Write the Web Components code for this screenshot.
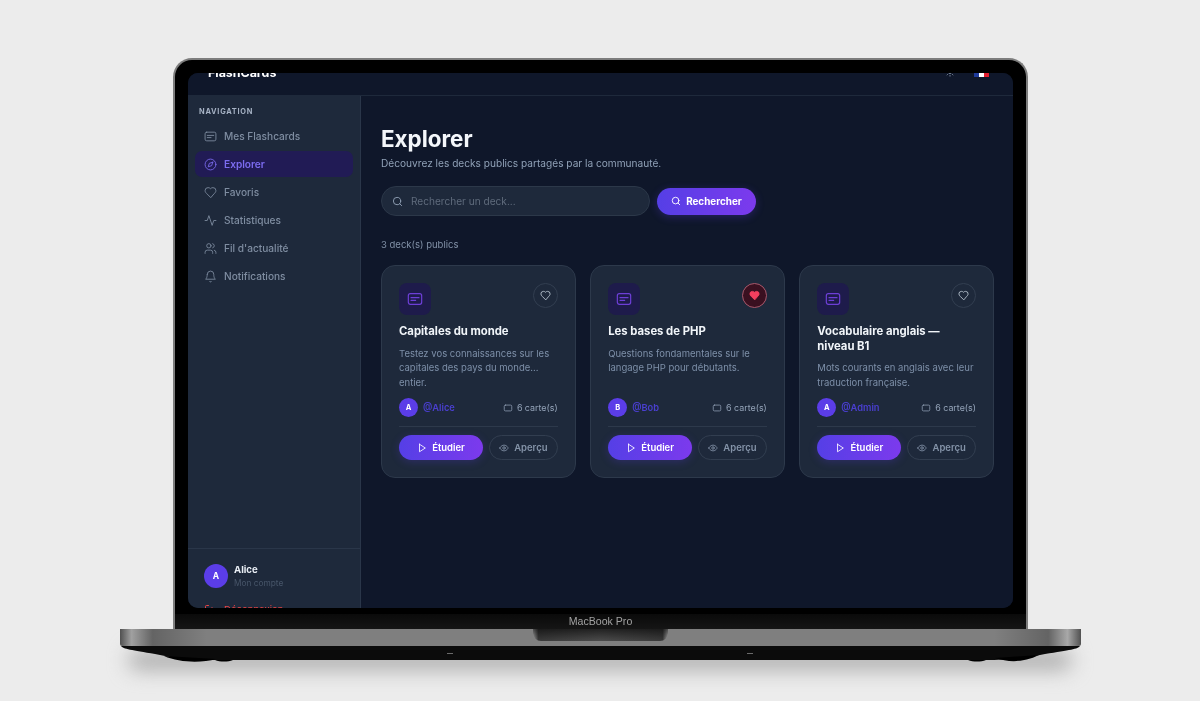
<!DOCTYPE html>
<html lang="fr">
<head>
<meta charset="utf-8">
<title>Explorer</title>
<style>
  html, body { margin: 0; height: 701px; overflow: hidden; background: #ececec; font-family: Inter, "Liberation Sans", sans-serif; }
</style>
</head>
<body>
<mac-frame>
  <app-header></app-header>
  <div style="display:flex;flex:1;min-height:0">
    <app-sidebar>
      <nav-item icon="cards">Mes Flashcards</nav-item>
      <nav-item icon="compass" active>Explorer</nav-item>
      <nav-item icon="heart">Favoris</nav-item>
      <nav-item icon="activity">Statistiques</nav-item>
      <nav-item icon="users">Fil d'actualité</nav-item>
      <nav-item icon="bell">Notifications</nav-item>
    </app-sidebar>
    <explore-page>
      <deck-card title="Capitales du monde" author="Alice" initial="A">Testez vos connaissances sur les capitales des pays du monde... entier.</deck-card>
      <deck-card title="Les bases de PHP" author="Bob" initial="B" liked>Questions fondamentales sur le langage PHP pour débutants.</deck-card>
      <deck-card title="Vocabulaire anglais — niveau B1" author="Admin" initial="A">Mots courants en anglais avec leur traduction française.</deck-card>
    </explore-page>
  </div>
</mac-frame>

<script>
const ICONS = {
  cards: '<rect x="2" y="4" width="20" height="16" rx="3"/><path d="M6 10h12M6 14h7"/>',
  card: '<rect x="3" y="5" width="18" height="14" rx="3"/>',
  compass: '<circle cx="12" cy="12" r="10"/><polygon points="16.24 7.76 14.12 14.12 7.76 16.24 9.88 9.88 16.24 7.76"/>',
  heart: '<path d="M19 14c1.49-1.46 3-3.21 3-5.5A5.5 5.5 0 0 0 16.5 3c-1.76 0-3 .5-4.5 2-1.5-1.5-2.74-2-4.5-2A5.5 5.5 0 0 0 2 8.5c0 2.3 1.5 4.05 3 5.5l7 7Z"/>',
  activity: '<path d="M22 12h-4l-3 9L9 3l-3 9H2"/>',
  users: '<path d="M16 21v-2a4 4 0 0 0-4-4H6a4 4 0 0 0-4 4v2"/><circle cx="9" cy="7" r="4"/><path d="M22 21v-2a4 4 0 0 0-3-3.87"/><path d="M16 3.13a4 4 0 0 1 0 7.75"/>',
  bell: '<path d="M6 8a6 6 0 0 1 12 0c0 7 3 9 3 9H3s3-2 3-9"/><path d="M10.3 21a1.94 1.94 0 0 0 3.4 0"/>',
  search: '<circle cx="11" cy="11" r="8"/><path d="m21 21-4.3-4.3"/>',
  play: '<polygon points="6 3 20 12 6 21 6 3"/>',
  eye: '<path d="M2 12s3-7 10-7 10 7 10 7-3 7-10 7-10-7-10-7Z"/><circle cx="12" cy="12" r="3"/>',
  sun: '<circle cx="12" cy="12" r="4"/><path d="M12 2v2M12 20v2M4.9 4.9l1.4 1.4M17.7 17.7l1.4 1.4M2 12h2M20 12h2M6.3 17.7l-1.4 1.4M19.1 4.9l-1.4 1.4"/>',
  logout: '<path d="M9 21H5a2 2 0 0 1-2-2V5a2 2 0 0 1 2-2h4"/><path d="m16 17 5-5-5-5"/><path d="M21 12H9"/>'
};

class UiIcon extends HTMLElement {
  connectedCallback() {
    const size = this.getAttribute('size') || 12;
    const fill = this.getAttribute('fill') || 'none';
    const stroke = this.getAttribute('stroke-width') || 2;
    this.attachShadow({mode: 'open'}).innerHTML = `
      <style>:host { display: inline-flex; flex: none; } svg { display: block; }</style>
      <svg width="${size}" height="${size}" viewBox="0 0 24 24" fill="${fill}" stroke="currentColor"
        stroke-width="${stroke}" stroke-linecap="round" stroke-linejoin="round">${ICONS[this.getAttribute('name')]}</svg>`;
  }
}
customElements.define('ui-icon', UiIcon);

class MacFrame extends HTMLElement {
  constructor() {
    super();
    this.attachShadow({mode: 'open'}).innerHTML = `
      <style>
        :host {
          display: flex; flex-direction: column; align-items: center; width: 1201px; padding-top: 58px;
          position: relative; filter: blur(.35px);
        }
        .lid {
          box-sizing: border-box; width: 855px; height: 571px; padding: 13px 13px 0;
          border: 2px solid #7d7d7d; border-bottom: 0; border-radius: 19px 19px 0 0;
          background: #000; display: flex; flex-direction: column;
        }
        .screen {
          height: 535px; flex: none; border-radius: 10px; overflow: hidden; background: #0f172a;
          display: flex; flex-direction: column;
        }
        .chin {
          flex: none; height: 15px; margin: 6px -13px 0; background: linear-gradient(#0a0a0a, #151515);
          color: #a2a2a2; font: 10.6px/15px "Liberation Sans", Arial, sans-serif; text-align: center;
        }
        .base {
          width: 961px; height: 17px; flex: none; position: relative; border-radius: 0 0 2px 2px;
          background: linear-gradient(90deg, #505050 0, #a0a0a0 1.2%, #646464 3.4%, #7f7f7f 9%, #7f7f7f 91%, #646464 96.600%, #a8a8a8 98.600%, #505050 100%);
        }
        .notch {
          position: absolute; left: 413px; top: 0; width: 135px; height: 12px; border-radius: 0 0 8px 8px;
          background: linear-gradient(90deg, #aaa 0, #3a3a3a 4%, #4c4c4c 50%, #3a3a3a 96%, #aaa 100%);
        }
        .notch::after {
          content: ""; position: absolute; inset: 0; border-radius: inherit;
          background: linear-gradient(rgba(0, 0, 0, .55), rgba(0, 0, 0, 0));
        }
        .under { display: block; width: 961px; height: 18px; flex: none; position: relative; }
        .shadow {
          position: absolute; left: 128px; top: 650px; width: 944px; height: 20px; background: #adadad;
          filter: blur(10px); border-radius: 10px;
        }
      </style>
      <div class="shadow"></div>
      <div class="lid">
        <div class="screen"><slot></slot></div>
        <div class="chin">MacBook Pro</div>
      </div>
      <div class="base"><div class="notch"></div></div>
      <svg class="under" viewBox="0 0 961 18">
        <path fill="#0b0b0b" d="M1 0H960C958 3 950 4 925 8L900 13C890 14 860 14 845 14H116C100 14 72 14 60 13L35 8C12 4 3 3 1 0Z"/>
        <path fill="#000" d="M44 10C60 17 82 17 96 13ZM95 14C100 16 108 16 113 14ZM848 14C853 16 861 16 866 14ZM875 12C890 17 905 16 919 9Z"/>
        <path fill="#8a8a8a" d="M327 7h6v.7h-6ZM627 7h6v.7h-6Z"/>
      </svg>`;
  }
}
customElements.define('mac-frame', MacFrame);

class AppHeader extends HTMLElement {
  constructor() {
    super();
    this.attachShadow({mode: 'open'}).innerHTML = `
      <style>
        :host {
          display: flex; flex: none; align-items: center; box-sizing: border-box; height: 47px; margin-top: -24px;
          padding: 0 24px 0 20px; background: #0f172a; border-bottom: 1px solid #1e293b; color: #fff;
        }
        .logo { font-size: 12.4px; font-weight: 700; flex: 1; }
        .sun { color: #8492a6; margin-right: 19px; }
        .flag { display: flex; width: 15px; height: 9px; margin-top: 1px; }
        .flag i { flex: 1; }
      </style>
      <span class="logo">FlashCards</span>
      <ui-icon class="sun" name="sun" size="10"></ui-icon>
      <span class="flag"><i style="background:#1e3a9a"></i><i style="background:#fff"></i><i style="background:#e11d2e"></i></span>`;
  }
}
customElements.define('app-header', AppHeader);

class AppSidebar extends HTMLElement {
  constructor() {
    super();
    this.attachShadow({mode: 'open'}).innerHTML = `
      <style>
        :host {
          display: flex; flex-direction: column; flex: none; box-sizing: border-box; width: 173px;
          background: #1e293b; border-right: 1px solid #2a3649;
        }
        .nav { flex: 1; display: flex; flex-direction: column; gap: 2px; padding: 0 7px; }
        .label { font-size: 7.4px; font-weight: 700; letter-spacing: .75px; color: #a6b2c4; padding: 11px 4px 5px; line-height: 9px; }
        .foot { flex: none; height: 56px; box-sizing: border-box; border-top: 1px solid #2a3649; padding: 15px 16px 0; display: flex; gap: 6px; }
        .avatar {
          width: 24px; height: 24px; border-radius: 50%; background: #5b3de8; color: #fff; flex: none;
          font-size: 8.5px; font-weight: 700; display: flex; align-items: center; justify-content: center;
        }
        .name { font-size: 9.6px; font-weight: 700; color: #e8edf4; line-height: 12px; }
        .sub { font-size: 8.300px; color: #475569; line-height: 12px; margin-top: 1px; }
        .out { flex: none; height: 4px; overflow: visible; padding-left: 16px; display: flex; gap: 8px; color: #ef4444; font-size: 9.6px; line-height: 12px; }
        .out ui-icon { height: 12px; }
      </style>
      <div class="nav">
        <div class="label">NAVIGATION</div>
        <slot></slot>
      </div>
      <div class="foot">
        <div class="avatar">A</div>
        <div><div class="name">Alice</div><div class="sub">Mon compte</div></div>
      </div>
      <div class="out"><ui-icon name="logout" size="12"></ui-icon><span>Déconnexion</span></div>`;
  }
}
customElements.define('app-sidebar', AppSidebar);

class NavItem extends HTMLElement {
  connectedCallback() {
    const active = this.hasAttribute('active');
    this.attachShadow({mode: 'open'}).innerHTML = `
      <style>
        :host {
          display: flex; align-items: center; gap: 7px; height: 26px; padding: 0 9px; border-radius: 7px;
          font-size: 10.15px; font-weight: ${active ? 600 : 500}; color: ${active ? '#7c6cf0' : '#7f8da1'};
          background: ${active ? '#211b55' : 'transparent'};
        }
      </style>
      <ui-icon name="${this.getAttribute('icon')}" size="13" stroke-width="1.600"></ui-icon>
      <slot></slot>`;
  }
}
customElements.define('nav-item', NavItem);

class ExplorePage extends HTMLElement {
  constructor() {
    super();
    this.attachShadow({mode: 'open'}).innerHTML = `
      <style>
        :host { display: block; flex: 1; min-width: 0; box-sizing: border-box; padding: 26px 19px 0 20px; background: #0f172a; }
        h1 { margin: 0; font-size: 22.4px; line-height: 33px; font-weight: 700; color: #f4f7fb; }
        p { margin: 1px 0 0; font-size: 10.15px; line-height: 14px; color: #8fa0b6; }
        .search { display: flex; align-items: center; gap: 7px; margin-top: 16px; }
        .field {
          box-sizing: border-box; width: 269px; height: 30px; border-radius: 15px; background: #1e293b;
          border: 1px solid #2c3849; display: flex; align-items: center; gap: 8px; padding: 0 10px;
          font-size: 10.100px; color: #5f6b7c;
        }
        .field ui-icon { color: #94a3b8; }
        .go {
          box-sizing: border-box; width: 99px; height: 27px; border-radius: 14px; color: #fff; font-size: 9.900px; font-weight: 700;
          background: linear-gradient(90deg, #553fe6, #7c3aed); display: flex; align-items: center; justify-content: center; gap: 5px;
          box-shadow: 0 2px 8px rgba(91, 61, 232, .3);
        }
        .count { margin-top: 23px; font-size: 9.500px; line-height: 12px; color: #8090a6; }
        .grid { display: grid; grid-template-columns: repeat(3, 1fr); gap: 14.500px; margin-top: 14px; }
      </style>
      <h1>Explorer</h1>
      <p>Découvrez les decks publics partagés par la communauté.</p>
      <div class="search">
        <div class="field"><ui-icon name="search" size="11"></ui-icon><span>Rechercher un deck...</span></div>
        <div class="go"><ui-icon name="search" size="10" stroke-width="2.200"></ui-icon><span>Rechercher</span></div>
      </div>
      <div class="count">3 deck(s) publics</div>
      <div class="grid"><slot></slot></div>`;
  }
}
customElements.define('explore-page', ExplorePage);

class DeckCard extends HTMLElement {
  connectedCallback() {
    const liked = this.hasAttribute('liked');
    const likeBtn = liked
      ? '<div class="like on"><ui-icon name="heart" size="11" fill="#f43f5e"></ui-icon></div>'
      : '<div class="like"><ui-icon name="heart" size="11"></ui-icon></div>';
    this.attachShadow({mode: 'open'}).innerHTML = `
      <style>
        :host {
          display: flex; flex-direction: column; box-sizing: border-box; height: 213px; padding: 17px;
          background: #1e293b; border: 1px solid #2d394b; border-radius: 14px;
        }
        .top { display: flex; justify-content: space-between; align-items: flex-start; }
        .tile { width: 32px; height: 32px; border-radius: 8px; background: #1e1b4b; color: #6d3fd6; display: flex; align-items: center; justify-content: center; }
        .like {
          box-sizing: border-box; width: 25px; height: 25px; border-radius: 50%; border: 1px solid #323e50;
          color: #b4bfcc; display: flex; align-items: center; justify-content: center;
        }
        .like.on { background: #3a1020; border-color: #a8596c; color: #f43f5e; }
        h3 { margin: 9px 0 0; padding-right: 8px; font-size: 11.300px; line-height: 14.500px; font-weight: 700; color: #f1f5f9; }
        .desc { flex: 1; margin: 8px 0 0; font-size: 9.500px; line-height: 14.500px; color: #7d8fa8; }
        .meta { display: flex; align-items: center; height: 19px; gap: 5px; font-size: 8.9px; }
        .av {
          width: 19px; height: 19px; border-radius: 50%; background: #5b3de8; color: #fff; font-size: 7.500px; font-weight: 700;
          display: flex; align-items: center; justify-content: center;
        }
        .who { flex: 1; color: #4a3fd0; font-weight: 600; font-size: 9.300px; }
        .num { color: #94a3b8; display: flex; align-items: center; gap: 4px; }
        .num ui-icon { color: #94a3b8; }
        .actions { display: flex; gap: 6px; border-top: 1px solid #2d394b; margin-top: 9px; padding-top: 8px; }
        .btn { box-sizing: border-box; height: 25px; border-radius: 13px; display: flex; align-items: center; justify-content: center; gap: 5px; font-size: 9.500px; font-weight: 600; }
        .study { width: 84px; flex: none; color: #fff; background: linear-gradient(90deg, #553fe6, #7c3aed); box-shadow: 0 2px 8px rgba(91, 61, 232, .25); }
        .peek { flex: 1; color: #8493a8; border: 1px solid #323e50; }
      </style>
      <div class="top">
        <div class="tile"><ui-icon name="cards" size="16" stroke-width="1.800"></ui-icon></div>
        ${likeBtn}
      </div>
      <h3>${this.getAttribute('title')}</h3>
      <div class="desc"><slot></slot></div>
      <div class="meta">
        <div class="av">${this.getAttribute('initial')}</div>
        <span class="who">@${this.getAttribute('author')}</span>
        <span class="num"><ui-icon name="card" size="10" stroke-width="1.800"></ui-icon>6 carte(s)</span>
      </div>
      <div class="actions">
        <div class="btn study"><ui-icon name="play" size="10"></ui-icon><span>Étudier</span></div>
        <div class="btn peek"><ui-icon name="eye" size="10"></ui-icon><span>Aperçu</span></div>
      </div>`;
  }
}
customElements.define('deck-card', DeckCard);
</script>
</body>
</html>
